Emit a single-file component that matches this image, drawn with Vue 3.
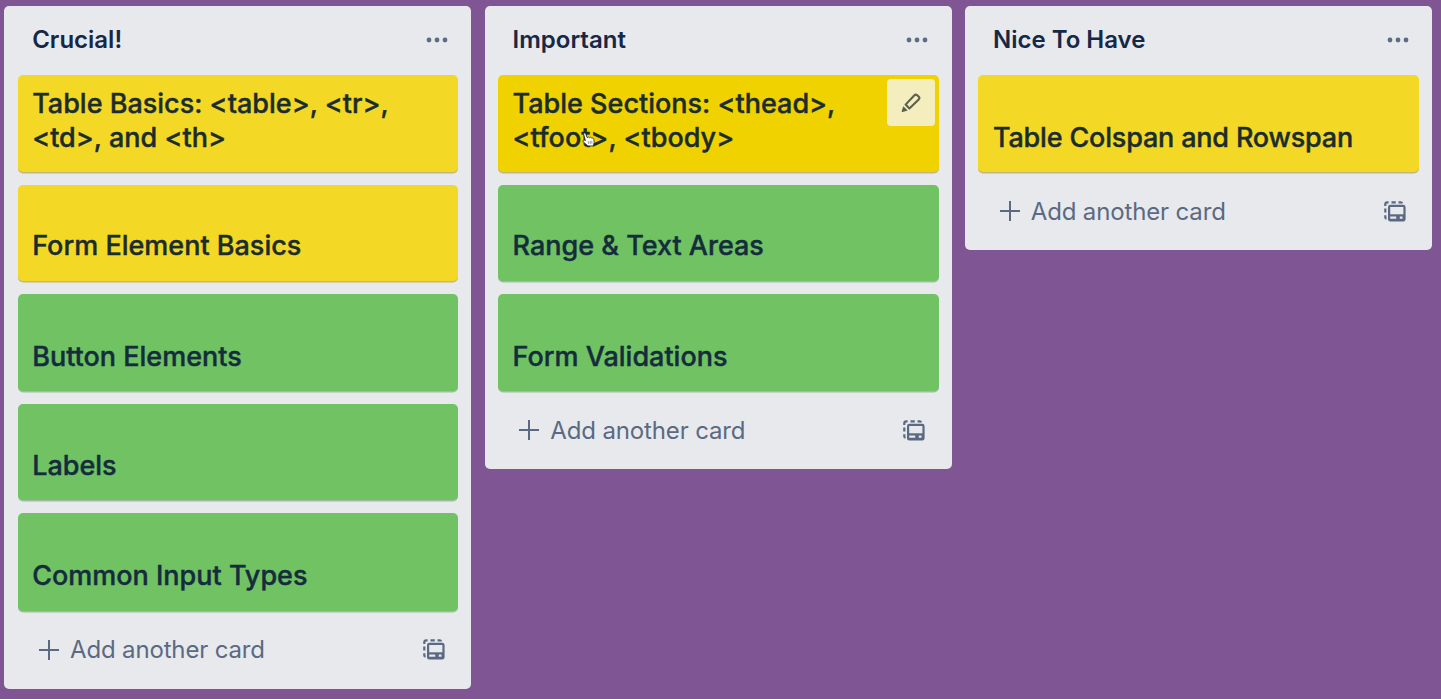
<script setup>
const lists = [
  {
    title: 'Crucial!',
    cards: [
      { lines: ['Table Basics: <table>, <tr>,', '<td>, and <th>'], color: 'yellow' },
      { lines: ['Form Element Basics'], color: 'yellow' },
      { lines: ['Button Elements'], color: 'green' },
      { lines: ['Labels'], color: 'green' },
      { lines: ['Common Input Types'], color: 'green' },
    ],
  },
  {
    title: 'Important',
    cards: [
      { lines: ['Table Sections: <thead>,', '<tfoot>, <tbody>'], color: 'yellow', active: true },
      { lines: ['Range & Text Areas'], color: 'green' },
      { lines: ['Form Validations'], color: 'green' },
    ],
  },
  {
    title: 'Nice To Have',
    cards: [{ lines: ['Table Colspan and Rowspan'], color: 'yellow', tight: true }],
  },
]
</script>

<template>
  <main class="board">
    <section v-for="list in lists" :key="list.title" class="list">
      <header class="head">
        <h2 class="title">{{ list.title }}</h2>
        <svg class="dots" width="22" height="6" viewBox="0 0 22 6">
          <circle cx="3" cy="3" r="2.4" />
          <circle cx="11" cy="3" r="2.4" />
          <circle cx="19" cy="3" r="2.4" />
        </svg>
      </header>
      <div class="cards">
        <article
          v-for="card in list.cards"
          :key="card.lines[0]"
          class="card"
          :class="[card.color, { active: card.active, tight: card.tight }]"
        >
          <p v-for="line in card.lines" :key="line" class="line">{{ line }}</p>
          <template v-if="card.active">
            <span class="edit">
              <svg width="22" height="22" viewBox="0 0 22 22">
                <path d="M5.6 12.6 14.4 3.2Q15.8 1.9 17.2 3.2L18.8 4.8Q20 6.1 18.7 7.4L9.4 16.4Z" fill="none" stroke="#5d614b" stroke-width="2.1" stroke-linejoin="round" />
                <path d="M3.3 14.2 7.7 18.4 2.7 19.9Q1.5 20 1.7 18.9Z" fill="#5d614b" />
              </svg>
            </span>
            <svg class="pointer" width="13" height="15" viewBox="0 0 13 15">
              <path d="M3.4 8.5 1.7 2.4C1.3.9 3.1.4 3.7 1.8L5.2 5.6 6.3 5l1.2.7 1.1-.5 1.2.9 1-.1 1 1.2.4 3.2-1 3.5H6L1.3 10C.3 8.7 1.8 7.6 3.4 8.5Z" fill="#fff" stroke="#242820" stroke-width=".8" stroke-linejoin="round" />
              <path d="M6.2 9.2 6.7 12M8.1 8.9l.3 3M9.8 8.8l.1 2.8" stroke="#555" stroke-width=".6" />
            </svg>
          </template>
        </article>
      </div>
      <footer class="foot">
        <svg class="plus" width="22" height="22" viewBox="0 0 22 22">
          <path d="M11 1v20M1 11h20" />
        </svg>
        <span class="add">Add another card</span>
        <svg class="template" width="22" height="21" viewBox="0 0 22 21">
          <rect x="5.1" y="4.9" width="15.4" height="14.6" rx="1.3" />
          <path d="M5 14.4h15.5" />
          <path class="block" d="M12.2 14.5h3.6v4.3h-3.6zM4.8 17.7h15.8v2H4.8zM18.5 14.5h2v4h-2z" />
          <path class="dash" d="M1.3 5V3.2Q1.3 1.3 3.3 1.3H4.6M7.5 1.3h4.3M14.5 1.3h2.2q1.1 0 1.5 1.1M1.3 7.6v4M1.3 14.2v2.2q.1 1 1.2 1.3" />
        </svg>
      </footer>
    </section>
  </main>
</template>

<style>
body {
  background: #7f5593;
  overflow: hidden;
}
</style>

<style scoped>
.board {
  display: flex;
  align-items: flex-start;
  gap: 13.4px;
  width: 1441px;
  height: 699px;
  box-sizing: border-box;
  padding: 6px 0 0 4.4px;
  background: #7f5593;
  font-family: Inter, "Liberation Sans", sans-serif;
  overflow: hidden;
}
.list {
  flex: none;
  width: 467px;
  box-sizing: border-box;
  padding: 0 13.2px;
  border-radius: 5px;
  background: #e7e9ed;
}
.head {
  display: flex;
  align-items: center;
  justify-content: space-between;
  height: 69px;
  box-sizing: border-box;
  padding: 0 10.2px 2px 14.6px;
}
.title {
  margin: 0;
  font-size: 24px;
  line-height: 30px;
  font-weight: 600;
  color: #172746;
}
.dots {
  fill: #5d6b85;
}
.cards {
  display: flex;
  flex-direction: column;
  gap: 12.4px;
}
.card {
  position: relative;
  display: flex;
  flex-direction: column;
  justify-content: flex-end;
  height: 97.2px;
  box-sizing: border-box;
  padding: 0 14.6px 16.7px;
  border-radius: 5px;
  color: #1b2c2c;
}
.card:nth-child(even) {
  height: 96.3px;
  margin-bottom: 0.9px;
  padding-bottom: 16.9px;
}
.yellow {
  background: #f3d926;
  box-shadow: 0 1.5px 0 #c2b978;
}
.green {
  background: #70c263;
  color: #142c3c;
  box-shadow: 0 1.5px 0 #9dbfa0;
}
.active {
  background: #f0d200;
}
.line {
  margin: 0;
  font-size: 27px;
  line-height: 34.5px;
  font-weight: 500;
  -webkit-text-stroke: 0.4px currentColor;
  white-space: nowrap;
}
.tight .line {
  letter-spacing: -0.18px;
}
.edit {
  position: absolute;
  top: 4px;
  right: 3.6px;
  display: flex;
  align-items: center;
  justify-content: center;
  width: 48px;
  height: 47px;
  border-radius: 4px;
  background: #f4edbd;
}
.pointer {
  position: absolute;
  left: 83.6px;
  top: 57px;
}
.foot {
  display: flex;
  align-items: center;
  height: 78px;
  box-sizing: border-box;
  padding: 0 13.2px 0 20.4px;
}
.plus {
  fill: none;
  stroke: #5b6982;
  stroke-width: 2;
}
.add {
  margin-left: 10px;
  font-size: 24px;
  line-height: 31px;
  letter-spacing: -0.15px;
  color: #5b6982;
  white-space: nowrap;
}
.template {
  margin-left: auto;
  fill: none;
  stroke: #5b6982;
  stroke-width: 2.2;
}
.template .block {
  fill: #5b6982;
  stroke: none;
}
</style>
